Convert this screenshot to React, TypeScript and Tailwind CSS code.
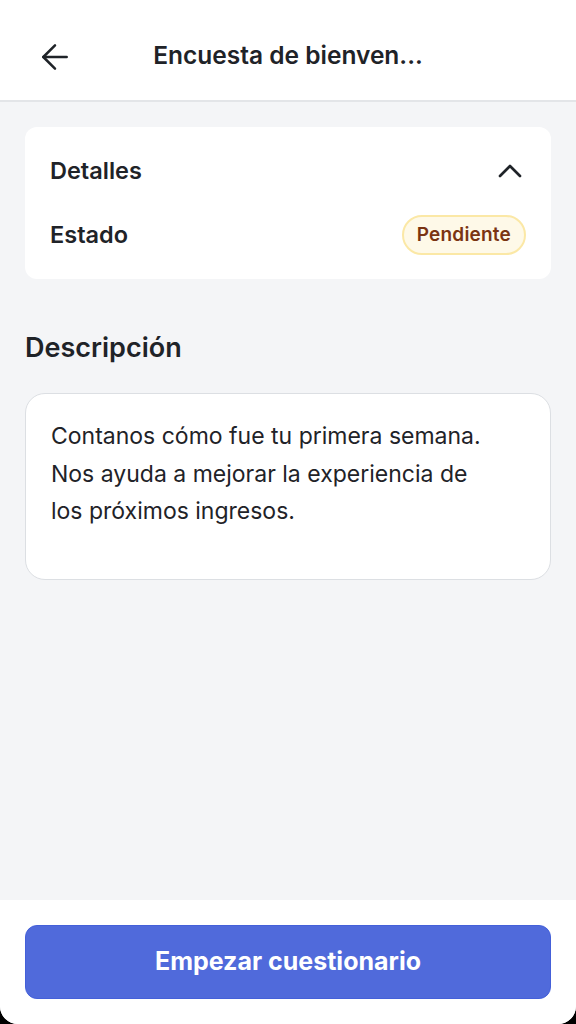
import { ArrowLeft, ChevronUp } from "lucide-react";

export default function App() {
  return (
    <div className="h-[1024px] w-[576px] bg-black font-['Inter','Noto_Sans',sans-serif] text-[#1f2328]">
      <div className="flex h-full flex-col overflow-hidden rounded-b-[18px] bg-[#f4f5f7]">
        {/* header */}
        <header className="relative flex h-[102px] shrink-0 items-center justify-center border-b-2 border-[#e3e5e8] bg-white pt-[11px]">
          <button className="absolute left-[35px] top-[37px] text-[#1f2328]">
            <ArrowLeft size={40} strokeWidth={1.5} />
          </button>
          <h1 className="text-[24.5px] font-semibold">Encuesta de bienven...</h1>
        </header>

        <main className="flex-1 px-[25px] pt-[25px]">
          {/* Detalles */}
          <div className="rounded-[12px] bg-white px-[25px] pt-[24px] pb-[24px]">
            <div className="flex h-[40px] items-center justify-between">
              <p className="text-[23.5px] font-semibold">Detalles</p>
              <ChevronUp size={40} strokeWidth={1.6} className="-mr-[4px]" />
            </div>
            <div className="mt-[24px] flex items-center justify-between">
              <p className="text-[23.5px] font-semibold">Estado</p>
              <span className="flex h-[40px] items-center rounded-full border-2 border-[#fbe8a6] bg-[#fef9e8] px-[13px] text-[19px] font-semibold tracking-[0.2px] text-[#7a3412]">
                Pendiente
              </span>
            </div>
          </div>

          {/* Descripción */}
          <h2 className="mt-[50px] text-[27px] leading-[38px] font-semibold">Descripción</h2>
          <div className="mt-[26px] h-[187px] rounded-[20px] border border-[#dcdfe3] bg-white pl-[25px] pr-[56px] pt-[24px]">
            <p className="text-[23px] leading-[37.5px] text-[#1f2328]">
              Contanos cómo fue tu primera semana. Nos ayuda a mejorar la experiencia de los próximos ingresos.
            </p>
          </div>
        </main>

        {/* footer */}
        <footer className="shrink-0 bg-white px-[25px] pt-[25px] pb-[25px]">
          <button className="flex h-[74px] w-full items-center justify-center rounded-[12px] border border-[#4460d9] bg-[#506adb] text-[25px] font-bold text-white">
            Empezar cuestionario
          </button>
        </footer>
      </div>
    </div>
  );
}
